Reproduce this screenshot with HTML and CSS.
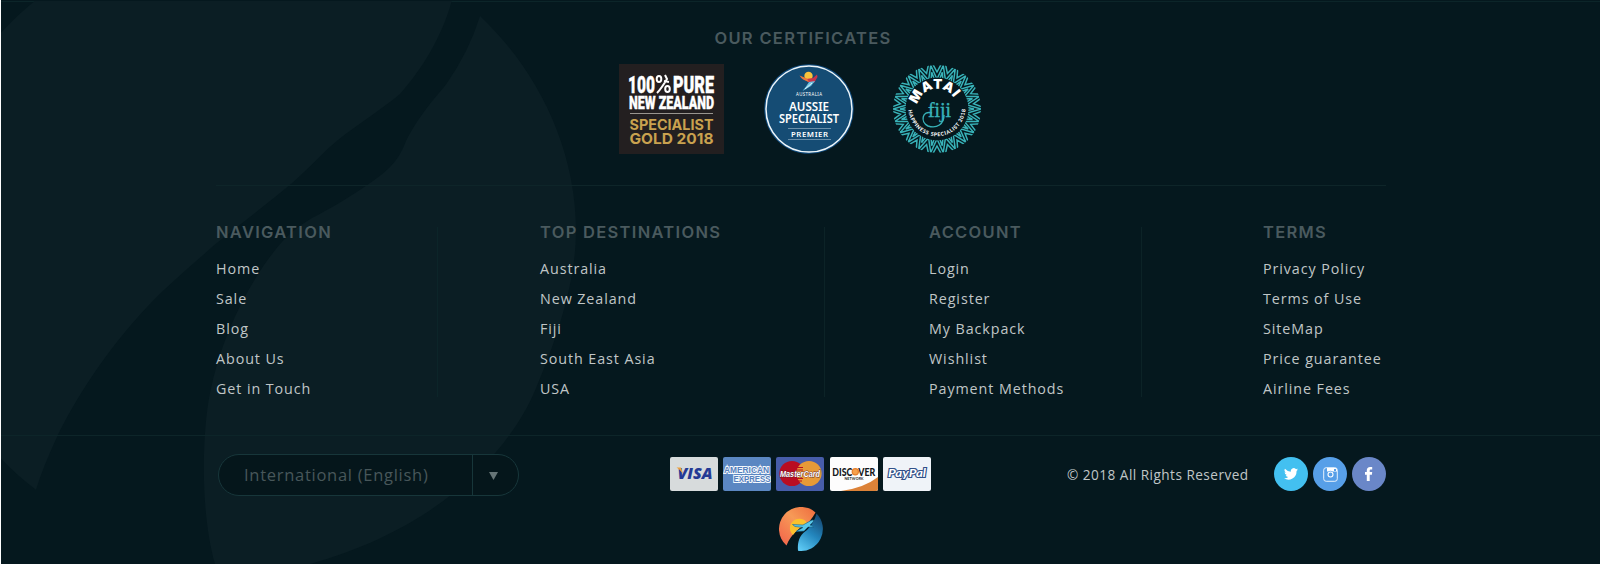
FILE: index.html
```
<!DOCTYPE html>
<html lang="en">
<head>
<meta charset="utf-8">
<title>Footer</title>
<link rel="stylesheet" href="styles.css">
</head>
<body>
<footer class="footer">
  <svg class="watermark" viewBox="0 0 600 600" preserveAspectRatio="none" aria-hidden="true">
    <path d="M0 36Q17 16 36 0H452C442 40 421 75 400 100C382 116 358 132 338 149C325 160 310 178 293 194C270 215 238 240 214 261C190 284 160 310 139 336C105 376 75 425 57 465Q43 497 36 521Q18 507 0 487Z"/>
    <path d="M480 17C535 72 576 155 576 245C576 300 557 360 536 413C512 475 445 560 310 600H215C200 545 202 460 210 418C220 365 241 318 264 282C280 258 290 246 312 232C330 222 350 210 375 191C390 180 400 168 406 150C420 122 432 108 446 90Q469 55 480 17Z"/>
  </svg>

  <section class="certs">
    <h2 class="heading">OUR CERTIFICATES</h2>
    <div class="badges">
      <svg class="badge-nz" width="105" height="90" viewBox="0 0 105 90">
        <rect width="105" height="90" fill="#231f20"/>
        <g font-family="Roboto, sans-serif" font-weight="900" fill="#fff" stroke="#fff" stroke-width=".4">
          <text x="9" y="28.500" font-size="24" textLength="27" lengthAdjust="spacingAndGlyphs">100</text>
          <text x="54" y="28.500" font-size="24" textLength="41" lengthAdjust="spacingAndGlyphs">PURE</text>
          <text x="10" y="44.500" font-size="19" textLength="85" lengthAdjust="spacingAndGlyphs">NEW ZEALAND</text>
        </g>
        <g fill="none" stroke="#fff" stroke-width="2">
          <ellipse cx="40" cy="15" rx="2.300" ry="3"/><ellipse cx="48.500" cy="25" rx="2.300" ry="3"/>
          <path d="M38 29C42 25 45 20 48 15L46 11M45 17L50 18"/>
        </g>
        <path d="M11 49.500H94" stroke="#99958f" stroke-width="1"/>
        <g font-family="Inter, sans-serif" font-weight="700" fill="#c9a24f">
          <text x="10.500" y="65.500" font-size="14" textLength="84" lengthAdjust="spacingAndGlyphs">SPECIALIST</text>
          <text x="10.500" y="79.500" font-size="15" textLength="84" lengthAdjust="spacingAndGlyphs">GOLD 2018</text>
        </g>
      </svg>
      <svg class="badge-au" width="90" height="90" viewBox="0 0 90 90">
        <circle cx="45" cy="45" r="44.800" fill="#0f4a7c"/>
        <circle cx="45" cy="45" r="43" fill="#154c74" stroke="#eef6fa" stroke-width="1.500"/>
        <circle cx="44.500" cy="12" r="4.200" fill="#f9c23c"/>
        <path d="M36 12L42 15L49 14L53 10.500L53.500 13L50 19L44 18Z" fill="#c8354c"/>
        <path d="M35.500 11.500L43 14.500L45 18Q38 16 35.500 11.500Z" fill="#e9783d"/>
        <path d="M51 17L47 22L38.500 27L42 22.500L45 18Z" fill="#6cc1e0"/>
        <path d="M48 19L41 25" stroke="#fff" stroke-width=".8"/>
        <g font-family="'Noto Sans', sans-serif" fill="#fff">
          <text x="32" y="31.800" font-size="4.400" textLength="26" lengthAdjust="spacing">AUSTRALIA</text>
          <g font-weight="600">
            <text x="25" y="46.500" font-size="12.500" textLength="40" lengthAdjust="spacingAndGlyphs">AUSSIE</text>
            <text x="15" y="59" font-size="12.500" textLength="60" lengthAdjust="spacingAndGlyphs">SPECIALIST</text>
            <text x="27" y="73.200" font-size="7.800" textLength="37" lengthAdjust="spacing">PREMIER</text>
          </g>
        </g>
        <path d="M24 64.500H67M24 75.500H67" stroke="#8eacc1" stroke-width=".7"/>
      </svg>
      <svg class="badge-fj" width="90" height="90" viewBox="0 0 90 90">
        <defs>
          <clipPath id="disc"><circle cx="45" cy="45" r="44"/></clipPath>
          <path id="arcTop" d="M25.400 40.800A20 20 0 0 1 65 45V55"/>
          <path id="arcBottom" d="M16.400 46A28.600 28.600 0 0 0 73.500 44V36"/>
        </defs>
        <g clip-path="url(#disc)"><g id="ring" fill="none" stroke="#38b2b8" stroke-width="1.500"></g></g>
        <circle cx="45" cy="45" r="31.500" fill="#05181e"/>
        <text font-family="Inter, sans-serif" font-weight="900" font-size="13.500" letter-spacing=".4" fill="#fff"><textPath href="#arcTop">MATAI</textPath></text>
        <text font-family="Lato, sans-serif" font-weight="900" font-size="5.200" letter-spacing=".6" fill="#fff"><textPath href="#arcBottom">HAPPINESS SPECIALIST 2018</textPath></text>
        <text x="36" y="53" font-family="'Liberation Serif', serif" font-size="21" fill="#38b2b8" stroke="#38b2b8" stroke-width=".4" textLength="23" lengthAdjust="spacingAndGlyphs">fiji</text>
        <path d="M40 49C30 46 28 58 36 62C45 65 52 60 52 51" fill="none" stroke="#38b2b8" stroke-width="1.400"/>
      </svg>
    </div>
  </section>

  <nav class="columns">
    <div class="col">
      <h3 class="heading">NAVIGATION</h3>
      <ul class="links"><li>Home</li><li>Sale</li><li>Blog</li><li>About Us</li><li>Get in Touch</li></ul>
    </div>
    <div class="col">
      <h3 class="heading">TOP DESTINATIONS</h3>
      <ul class="links"><li>Australia</li><li>New Zealand</li><li>Fiji</li><li>South East Asia</li><li>USA</li></ul>
    </div>
    <div class="col">
      <h3 class="heading">ACCOUNT</h3>
      <ul class="links"><li>Login</li><li>Register</li><li>My Backpack</li><li>Wishlist</li><li>Payment Methods</li></ul>
    </div>
    <div class="col">
      <h3 class="heading">TERMS</h3>
      <ul class="links"><li>Privacy Policy</li><li>Terms of Use</li><li>SiteMap</li><li>Price guarantee</li><li>Airline Fees</li></ul>
    </div>
  </nav>

  <section class="bottom">
    <div class="region">
      <span class="region-name">International (English)</span>
      <span class="region-arrow"><svg width="9" height="8" viewBox="0 0 9 8"><path d="M0 0H9L4.500 8Z" fill="#667577"/></svg></span>
    </div>
    <div class="cards">
      <svg width="48" height="34" viewBox="0 0 48 34">
        <rect width="48" height="34" rx="2" fill="#d7dbdc"/>
        <text x="7.500" y="22" font-family="'Open Sans', sans-serif" font-weight="800" font-style="italic" font-size="16" fill="#243a94" textLength="35" lengthAdjust="spacingAndGlyphs">VISA</text>
        <path d="M6.500 10.500H11L13 17Q11 13 6.500 10.500Z" fill="#eda13a"/>
      </svg>
      <svg width="48" height="34" viewBox="0 0 48 34">
        <rect width="48" height="34" rx="2" fill="#5b87c2"/>
        <g font-family="'Liberation Sans', sans-serif" font-weight="700" font-size="9.300" fill="#5580bd" stroke="#f4f8fc" stroke-width="2" paint-order="stroke">
          <text x="1" y="15.500" textLength="45" lengthAdjust="spacingAndGlyphs">AMERICAN</text>
          <text x="10.500" y="25" textLength="37" lengthAdjust="spacingAndGlyphs">EXPRESS</text>
        </g>
      </svg>
      <svg width="48" height="34" viewBox="0 0 48 34">
        <rect width="48" height="34" rx="2" fill="#475daa"/>
        <circle cx="16" cy="16.500" r="12.600" fill="#b90d22"/>
        <circle cx="33" cy="16.500" r="12.600" fill="#e79a37"/>
        <path d="M21 10.500H27M20.500 13H27M20.500 21.500H27M21 24H26" stroke="#b90d22"/>
        <text x="4" y="20.300" font-family="'Liberation Sans', sans-serif" font-weight="700" font-style="italic" font-size="9.400" fill="#fff" stroke="#5a2433" stroke-width=".8" paint-order="stroke" textLength="40" lengthAdjust="spacingAndGlyphs">MasterCard</text>
      </svg>
      <svg width="48" height="34" viewBox="0 0 48 34">
        <rect width="48" height="34" rx="2" fill="#fdfdfd"/>
        <path d="M48 20V32Q48 34 46 34H11Q34 31 48 20Z" fill="#dc8238"/>
        <g font-family="Lato, sans-serif" font-weight="900" fill="#15181b">
          <text x="2.300" y="18.600" font-size="10.600" textLength="20" lengthAdjust="spacingAndGlyphs">DISC</text>
          <text x="28.300" y="18.600" font-size="10.600" textLength="17" lengthAdjust="spacingAndGlyphs">VER</text>
          <text x="14.500" y="23.300" font-size="3.600" font-weight="700" textLength="19" lengthAdjust="spacing">NETWORK</text>
        </g>
        <circle cx="25.300" cy="14.800" r="3.100" fill="#f6a04b" stroke="#e67e2c" stroke-width="1.200"/>
      </svg>
      <svg width="48" height="34" viewBox="0 0 48 34">
        <rect width="48" height="34" rx="2" fill="#eff3f8"/>
        <text x="5" y="20" font-family="Lato, sans-serif" font-weight="700" font-style="italic" font-size="12" fill="#fff" stroke="#304f88" stroke-width="2.200" paint-order="stroke" textLength="38" lengthAdjust="spacingAndGlyphs">PayPal</text>
      </svg>
      <svg class="brand" width="44" height="44" viewBox="0 0 44 44">
        <defs>
          <linearGradient id="warm" x1="0" y1="1" x2="1" y2="0"><stop offset="0" stop-color="#f2604a"/><stop offset=".55" stop-color="#f79a57"/><stop offset="1" stop-color="#ee6a3d"/></linearGradient>
          <linearGradient id="cool" x1=".7" y1="0" x2=".2" y2="1"><stop offset="0" stop-color="#164a75"/><stop offset=".5" stop-color="#2386bd"/><stop offset="1" stop-color="#5cc8f3"/></linearGradient>
        </defs>
        <path d="M7.500 38.500A22 22 0 0 1 36.500 5.400Q34 10 30 15C22 19 12 27 7.500 38.500Z" fill="url(#warm)"/>
        <path d="M14 28A9.300 9.300 0 1 1 28 16Q19 21 14 28Z" fill="#fbc12d"/>
        <path d="M37.500 6.500A22 22 0 0 1 19 43.800C18 33 22 27 28 23C33 18 36 13 37.500 6.500Z" fill="url(#cool)"/>
        <path d="M13.500 17.500L24 18L32 13.500Q36 12 34 15L31 18L35 20H29L25 24L17 24.500L24 20.500L16 19.500Z" fill="#58c7e8" stroke="#17638c" stroke-width=".6"/>
      </svg>
    </div>
    <p class="copyright">© 2018 All Rights Reserved</p>
    <div class="social">
      <span class="dot twitter"><svg width="14" height="12" viewBox="0 0 24 20"><path fill="#fff" d="M24 2.400a10 10 0 0 1-2.800.8A5 5 0 0 0 23.300.4a10 10 0 0 1-3.100 1.200A4.900 4.900 0 0 0 11.800 6 14 14 0 0 1 1.700.9a4.900 4.900 0 0 0 1.500 6.600A5 5 0 0 1 1 6.900a4.900 4.900 0 0 0 3.900 4.900 5 5 0 0 1-2.200.1 4.900 4.900 0 0 0 4.600 3.400A10 10 0 0 1 0 17.300 14 14 0 0 0 21.500 4.900 10 10 0 0 0 24 2.400Z"/></svg></span>
      <span class="dot instagram"><svg width="15" height="15" viewBox="0 0 15 15"><rect x=".7" y=".7" width="13.600" height="13.600" rx="2.500" fill="none" stroke="#e8f2fc" stroke-width="1"/><path d="M4 1H12.500Q14 1 14 3V4.500H9.800A4 4 0 0 0 5.200 4.500H4Z" fill="#fff"/><rect x="11" y="2" width="2" height="2" fill="#579fe8"/><circle cx="7.500" cy="7.500" r="2.500" fill="none" stroke="#fff" stroke-width="1.100"/></svg></span>
      <span class="dot facebook"><svg width="8" height="14" viewBox="0 0 8 14"><path fill="#fff" d="M1.800 14V7.700H0V5.100H1.800V3.600C1.800 1.200 3 0 5.100 0H7.200V2.500H5.900C5 2.500 4.700 2.900 4.700 3.700V5.100H7.200L6.900 7.700H4.700V14Z"/></svg></span>
    </div>
  </section>
</footer>
<script src="ring.js"></script>
</body>
</html>
```

FILE: styles.css
```
* { box-sizing: border-box; }
body {
  margin: 0;
  background: #fff;
  font-family: "Open Sans", sans-serif;
}
.footer {
  position: relative;
  height: 564px;
  margin-left: 1px;
  padding: 0 214px 0 215px;
  background: #05181e;
  border-top: 1px solid #05181e;
  overflow: hidden;
}
.footer::before {
  content: "";
  display: block;
  height: 1px;
  margin: 0 -215px;
  background: #0c2529;
}
.watermark {
  position: absolute;
  left: -1px;
  top: -1px;
  width: 600px;
  height: 564px;
  fill: #0b1e24;
}
.heading {
  margin: 0;
  font: 600 16.5px/20px Inter, sans-serif;
  letter-spacing: 1.3px;
  color: #4a5a5e;
  white-space: nowrap;
}
.certs {
  position: relative;
  height: 184px;
  padding-top: 26px;
  border-bottom: 1px solid #0e2529;
}
.certs .heading { text-align: center; padding-left: 4px; }
.badges {
  display: flex;
  justify-content: center;
  align-items: center;
  margin-top: 16px;
  padding-right: 1px;
}
.badge-au { margin-left: 40px; }
.badge-fj { margin-left: 38px; }
.columns {
  position: relative;
  display: grid;
  grid-template-columns: 222px 387px 317px 1fr;
  height: 249px;
  padding-top: 41px;
}
.col {
  height: 170px;
  border-right: 1px solid #0c2327;
}
.col:nth-child(1) { border-right-color: #0c2529; }
.col:nth-child(2) { padding-left: 102px; }
.col:nth-child(3) { padding-left: 104px; }
.col:nth-child(4) { padding-left: 121px; border-right: 0; }
.col .heading { margin-top: -5px; }
.links {
  margin: 12px 0 0;
  padding: 0;
  list-style: none;
}
.links li {
  height: 30px;
  font: 400 14.3px/30px "Open Sans", sans-serif;
  letter-spacing: .92px;
  color: #c0c6c7;
  white-space: nowrap;
}
.bottom {
  position: relative;
  display: flex;
  align-items: flex-start;
  margin: 0 -214px 0 -215px;
  padding: 18px 214px 0 217px;
  border-top: 1px solid #0d2529;
}
.region {
  display: flex;
  width: 301px;
  height: 42px;
  border: 1px solid #17363a;
  border-radius: 21px;
  background: #05161b;
}
.region-name {
  width: 254px;
  padding-left: 25px;
  border-right: 1px solid #17363a;
  font: 400 16.5px/40px "Open Sans", sans-serif;
  letter-spacing: .72px;
  color: #48575a;
}
.region-arrow { padding: 17px 0 0 16px; line-height: 0; }
.cards {
  display: grid;
  grid-template-columns: repeat(5, 48px);
  column-gap: 5.3px;
  row-gap: 16px;
  margin: 3px 0 0 151px;
}
.cards svg { display: block; }
.brand { grid-column: 1 / -1; justify-self: center; margin-left: 1px; }
.copyright {
  margin: 11px 0 0 136px;
  width: 207px;
  font: 400 13.6px/20px "Open Sans", sans-serif;
  letter-spacing: .47px;
  color: #c0c6c7;
  white-space: nowrap;
}
.social { display: flex; gap: 5px; margin-top: 3px; }
.dot {
  display: flex;
  align-items: center;
  justify-content: center;
  width: 34px;
  height: 34px;
  border-radius: 50%;
}
.twitter { background: #43c0f0; }
.instagram { background: #579fe8; }
.facebook { background: #6a87c8; }
```

FILE: ring.js
```
const ring = document.getElementById("ring");
const teeth = 22;
[[23, 37], [30, 44], [37, 51]].forEach(([inner, outer]) => {
  const points = [];
  for (let i = 0; i < teeth * 2; i++) {
    const r = i % 2 ? inner : outer;
    const a = (i / (teeth * 2)) * Math.PI * 2;
    points.push((45 + r * Math.cos(a)).toFixed(2) + "," + (45 + r * Math.sin(a)).toFixed(2));
  }
  const line = document.createElementNS("http://www.w3.org/2000/svg", "polygon");
  line.setAttribute("points", points.join(" "));
  ring.appendChild(line);
});
```
